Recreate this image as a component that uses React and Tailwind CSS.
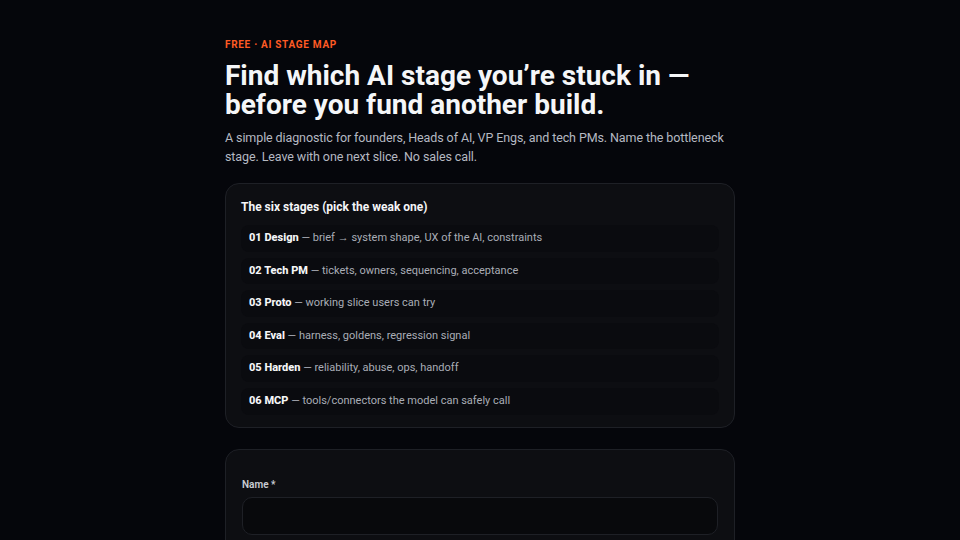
import React from 'react';

const stages = [
  { id: '01', name: 'Design', text: 'brief → system shape, UX of the AI, constraints' },
  { id: '02', name: 'Tech PM', text: 'tickets, owners, sequencing, acceptance' },
  { id: '03', name: 'Proto', text: 'working slice users can try' },
  { id: '04', name: 'Eval', text: 'harness, goldens, regression signal' },
  { id: '05', name: 'Harden', text: 'reliability, abuse, ops, handoff' },
  { id: '06', name: 'MCP', text: 'tools/connectors the model can safely call' },
];

function App() {
  return (
    <div
      className="min-h-screen bg-[#05060b] text-white"
      style={{ fontFamily: 'Roboto, "Liberation Sans", sans-serif' }}
    >
      <div className="mx-auto w-[510px] pt-[39px]">
        {/* Eyebrow + hero copy */}
        <div className="text-[10px] font-bold uppercase tracking-[0.07em] leading-[12px] text-[#ff5a24]">
          FREE · AI STAGE MAP
        </div>
        <h1 className="mt-[10px] text-[28px] font-bold leading-[29px] text-[#f5f6f8]">
          Find which AI stage you’re stuck in — before you fund another build.
        </h1>
        <p className="mt-[9px] text-[12.5px] tracking-[-0.1px] leading-[19px] text-[#b5b9c2]">
          A simple diagnostic for founders, Heads of AI, VP Engs, and tech PMs. Name the bottleneck stage. Leave with one next slice. No sales call.
        </p>

        {/* Stage list */}
        <div className="mt-[17px] rounded-[14px] border border-[#1e2026] bg-[#0d0e12] px-[15px] pt-[15px] pb-[12px]">
          <h2 className="text-[12px] font-bold leading-[16px] text-[#f5f6f8]">
            The six stages (pick the weak one)
          </h2>
          <div className="mt-[10px] flex flex-col gap-[6px]">
            {stages.map((s) => (
              <div key={s.id} className="rounded-[8px] bg-[#0a0b0f] px-[8px] py-[6px] text-[11px] leading-[14.6px] text-[#a9adb6]">
                <span className="font-extrabold text-[#f5f6f8]">{s.id} {s.name}</span> — {s.text}
              </div>
            ))}
          </div>
        </div>

        {/* Form */}
        <div className="mt-[21px] rounded-[14px] border border-[#1e2026] bg-[#0d0e12] px-[16px] pt-[29px] pb-[20px]">
          <label className="block text-[10px] font-semibold leading-[12px] text-[#c9ccd2]">Name *</label>
          <input
            type="text"
            className="mt-[6px] block h-[38px] w-full rounded-[10px] border border-[#1e2026] bg-[#08090c] px-3 text-[12px] text-white outline-none"
          />
        </div>
      </div>
    </div>
  );
}

export default App;
